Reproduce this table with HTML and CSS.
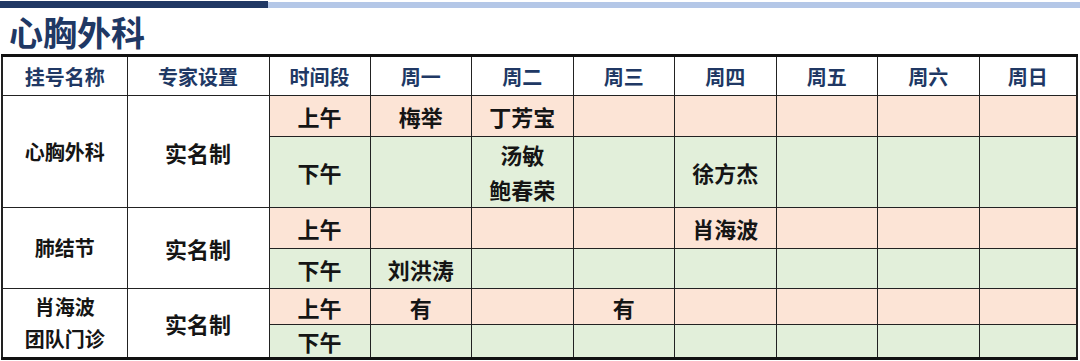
FILE: index.html
```html
<!DOCTYPE html>
<html lang="zh">
<head>
<meta charset="utf-8">
<link rel="stylesheet" href="styles.css">
</head>
<body>
<div class="topbar"><div class="bar-dark"></div><div class="bar-light"></div></div>
<h1 class="title">心胸外科</h1>
<table class="sched">
  <colgroup>
    <col class="c1"><col class="c2"><col class="c3">
    <col class="cd"><col class="cd"><col class="cd"><col class="cd"><col class="cd"><col class="cd"><col class="cd7">
  </colgroup>
  <thead>
    <tr class="hrow"><th>挂号名称</th><th>专家设置</th><th>时间段</th><th>周一</th><th>周二</th><th>周三</th><th>周四</th><th>周五</th><th>周六</th><th>周日</th></tr>
  </thead>
  <tbody>
    <tr class="am r1"><td rowspan="2" class="name">心胸外科</td><td rowspan="2" class="set">实名制</td><td>上午</td><td>梅举</td><td>丁芳宝</td><td></td><td></td><td></td><td></td><td></td></tr>
    <tr class="pm r2"><td>下午</td><td></td><td class="two">汤敏<br>鲍春荣</td><td></td><td>徐方杰</td><td></td><td></td><td></td></tr>
    <tr class="am r3 grp"><td rowspan="2" class="name">肺结节</td><td rowspan="2" class="set">实名制</td><td>上午</td><td></td><td></td><td></td><td>肖海波</td><td></td><td></td><td></td></tr>
    <tr class="pm r4"><td>下午</td><td>刘洪涛</td><td></td><td></td><td></td><td></td><td></td><td></td></tr>
    <tr class="am r5 grp"><td rowspan="2" class="name two-s">肖海波<br>团队门诊</td><td rowspan="2" class="set">实名制</td><td>上午</td><td>有</td><td></td><td>有</td><td></td><td></td><td></td><td></td></tr>
    <tr class="pm r6"><td>下午</td><td></td><td></td><td></td><td></td><td></td><td></td><td></td></tr>
  </tbody>
</table>
</body>
</html>
```
FILE: styles.css
```css
html, body {
  margin: 0;
  padding: 0;
  background: #ffffff;
  font-family: "Noto Sans CJK SC", "Noto Sans", sans-serif;
}
.topbar {
  display: flex;
  height: 7px;
  margin-top: 1px;
}
.bar-dark {
  width: 268px;
  background: #203864;
}
.bar-light {
  flex: 1;
  background: #b4c7e7;
  margin-top: 1px;
}
.title {
  margin: 0;
  padding-left: 9px;
  height: 46px;
  line-height: 48px;
  font-size: 34px;
  font-weight: 700;
  color: #1f3864;
}
.sched {
  margin-left: 1px;
  width: 1077px;
  table-layout: fixed;
  border-collapse: collapse;
  border-top: 3px solid #111;
  border-bottom: 3px solid #111;
  border-left: 2px solid #222;
  border-right: 2px solid #222;
}
.c1 { width: 125px; }
.c2 { width: 142px; }
.c3 { width: 101px; }
.cd { width: 101.5px; }
.cd7 { width: 98px; }
.sched th, .sched td {
  border: 1px solid #222;
  padding: 0;
  text-align: center;
  vertical-align: middle;
  font-weight: 700;
}
.sched th {
  font-size: 20px;
  color: #203864;
  background: #fff;
}
.sched td {
  font-size: 22px;
  color: #151515;
}
.hrow { height: 40px; }
.r1 { height: 41px; }
.r2 { height: 71px; }
.r3 { height: 41px; }
.r4 { height: 40px; }
.r5 { height: 36px; }
.r6 { height: 33px; }
.am td { background: #fce4d6; }
.pm td { background: #e2efda; }
.sched td.name {
  background: #fff;
  font-size: 20px;
  line-height: 32px;
}
.sched td.set {
  background: #fff;
}
.sched td.two {
  line-height: 35px;
}
```
